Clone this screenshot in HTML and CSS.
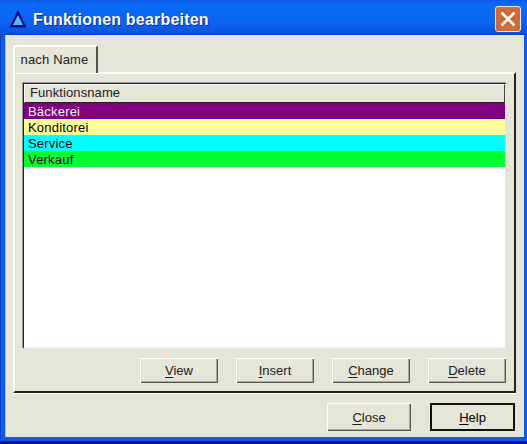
FILE: index.html
```html
<!DOCTYPE html>
<html lang="de">
<head>
<meta charset="utf-8">
<title>Funktionen bearbeiten</title>
<link rel="stylesheet" href="styles.css">
</head>
<body>
<div class="window">
  <header class="titlebar">
    <svg class="app-icon" width="18" height="18" viewBox="0 0 18 18">
      <path d="M9 0 L17.5 17.5 L0.5 17.5 Z" fill="#000a8c"/>
      <path d="M9 5 L14 15 L4 15 Z" fill="#5fb4f5"/>
    </svg>
    <span class="title">Funktionen bearbeiten</span>
    <div class="close-x">
      <svg width="24" height="24" viewBox="0 0 24 24">
        <path d="M5.5 5.5 L18.5 18.5 M18.5 5.5 L5.5 18.5" stroke="#fff" stroke-width="2.6" fill="none"/>
      </svg>
    </div>
  </header>
  <div class="client">
    <div class="tabs"><div class="tab">nach Name</div></div>
    <section class="panel">
      <div class="list">
        <div class="list-head"><span>Funktionsname</span></div>
        <div class="row purple">Bäckerei</div>
        <div class="row yellow">Konditorei</div>
        <div class="row cyan">Service</div>
        <div class="row green">Verkauf</div>
      </div>
      <div class="panel-buttons">
        <button class="btn"><u>V</u>iew</button>
        <button class="btn"><u>I</u>nsert</button>
        <button class="btn"><u>C</u>hange</button>
        <button class="btn"><u>D</u>elete</button>
      </div>
    </section>
    <div class="dialog-buttons">
      <button class="btn big"><u>C</u>lose</button>
      <button class="btn big default"><u>H</u>elp</button>
    </div>
  </div>
</div>
</body>
</html>
```

FILE: styles.css
```css
* { box-sizing: border-box; }
html, body { margin: 0; padding: 0; }
body { width: 527px; height: 444px; overflow: hidden; font-family: "Liberation Sans", Arial, sans-serif; font-size: 13px; color: #000; }
.window { width: 527px; height: 444px; display: flex; flex-direction: column; background: #0a5ce8; border-bottom: 3px solid #00109a; border-left: 1px solid #0a3cc8; padding-bottom: 4px; }
.titlebar { height: 35px; flex: none; display: flex; align-items: center; padding: 0 6px 0 8px; margin-left: -1px; background: linear-gradient(#0a58e0 0, #0b6cfa 12%, #0a62f0 70%, #0a50dc 100%); border-bottom: 1px solid #0340d0; }
.app-icon { flex: none; margin-top: 3px; margin-left: 1px; }
.title { margin-left: 6px; margin-top: 5px; font-family: "Liberation Sans", sans-serif; font-weight: 700; font-size: 16px; letter-spacing: 0.2px; color: #fff; text-shadow: 1px 1px 0 #0a2a90; flex: 1; }
.close-x { width: 26px; height: 26px; flex: none; margin-top: 3px; display: flex; align-items: center; justify-content: center; background: #cf6a3a; border: 1px solid #e8e8e8; border-radius: 3px; }
.client { flex: 1; margin: 0 3px 0 4px; padding: 10px 8px 0 7px; background: #e5e5d8; border-left: 1px solid #9cc0f4; display: flex; flex-direction: column; }
.tabs { height: 27px; display: flex; flex: none; }
.tab { width: 85px; height: 28px; background: #e5e5d8; border: 2px solid #fff; border-bottom: 0; border-right: 2px solid #555; border-radius: 2px 2px 0 0; padding: 5px 2px 0 0; text-align: center; font-size: 13px; letter-spacing: 0.15px; color: #222; position: relative; z-index: 1; }
.panel { width: 503px; height: 321px; flex: none; display: flex; flex-direction: column; padding: 9px 8px 0 8px; border: 2px solid; border-color: #fff #222 #222 #fff; box-shadow: 0 1px 0 #fff; }
.list { height: 266px; width: 484px; flex: none; background: #fff; border-style: solid; border-width: 1px 2px 2px 1px; border-color: #222 #e5e5d8 #eeeeea #222; box-shadow: -1px -1px 0 #999; }
.list-head { height: 19px; background: #e5e5d8; border: 1px solid; border-color: #fff #444 #222 #fff; padding: 0 0 0 5px; font-size: 13px; line-height: 16px; color: #222; letter-spacing: 0.1px; }
.row { height: 16px; line-height: 18px; padding-left: 4px; font-size: 13px; letter-spacing: 0.2px; }
.purple { background: #800080; color: #f4f4f4; }
.yellow { background: #ffff99; }
.cyan { background: #00ffff; }
.green { background: #00ff33; }
.panel-buttons { display: flex; justify-content: flex-end; gap: 18px; margin-top: 9px; }
.btn { width: 78px; height: 25px; padding: 0; font-family: "Liberation Sans", Arial, sans-serif; font-size: 13px; color: #222; background: #e5e5d8; border: none; box-shadow: inset 1px 1px 0 #fff, inset -1px -1px 0 #5a5a55, inset -2px -2px 0 #aaa99c; }
.btn u { text-underline-offset: 2px; }
.dialog-buttons { display: flex; justify-content: flex-end; gap: 19px; margin-top: 10px; padding-right: 1px; }
.big { width: 84px; height: 28px; }
.default { width: 85px; border: 2px solid #111; box-shadow: none; color: #000; }
```
